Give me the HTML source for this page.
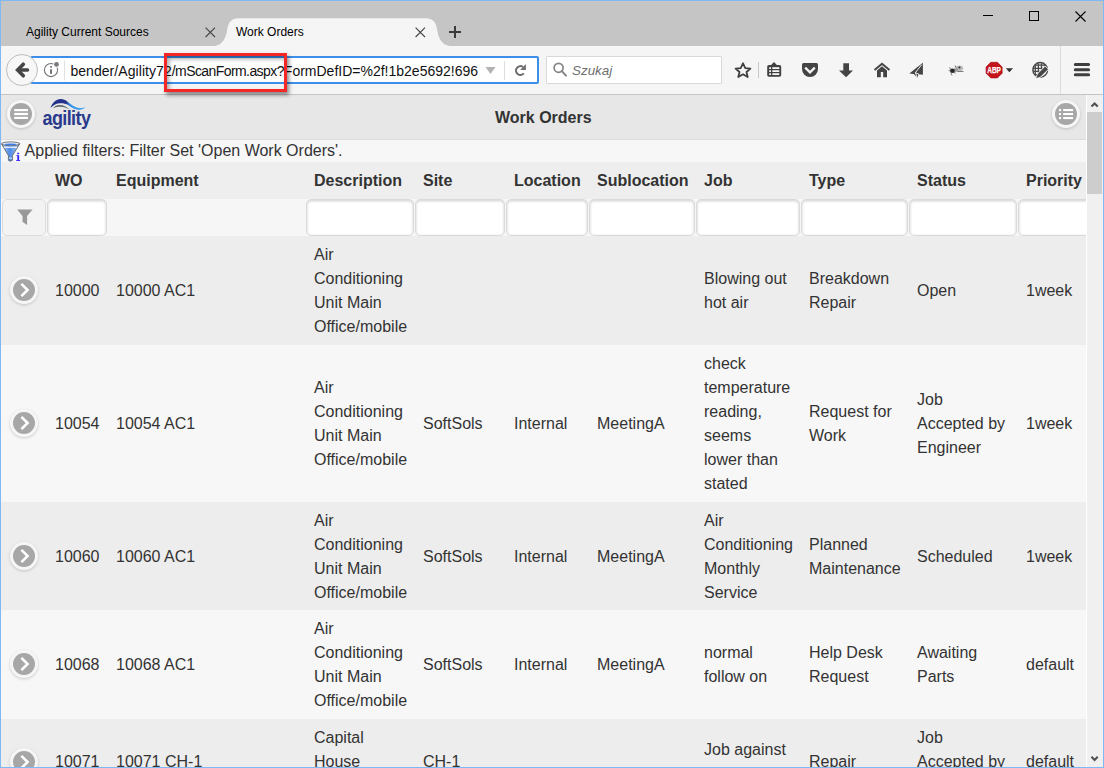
<!DOCTYPE html>
<html><head><meta charset="utf-8">
<style>
*{box-sizing:border-box}
html,body{margin:0;padding:0}
body{width:1104px;height:768px;overflow:hidden;position:relative;background:#f9f9f9;font-family:"Liberation Sans",sans-serif;color:#333}
.abs{position:absolute}
svg{position:absolute;overflow:visible}
#tabbar{left:0;top:0;width:1104px;height:46px;background:#c5c5c5}
#navbar{left:0;top:46px;width:1104px;height:49px;background:#f5f5f5;border-bottom:1px solid #c4c4c4}
.tabt{font-size:12px;color:#000;top:25px;line-height:15px;white-space:nowrap}
#urlbar{left:30px;top:56px;width:509px;height:28px;border:2px solid #3c8ee8;background:#fff;border-radius:2px}
#urltext{left:70.4px;top:62.4px;width:407.2px;height:20px;overflow:hidden;font-size:14px;line-height:19px;color:#111;white-space:nowrap}
#search{left:546px;top:56px;width:176px;height:28px;border:1px solid #d9d9d9;background:#fff;border-radius:1px}
#border{left:0;top:0;width:1104px;height:768px;border:1px solid #7fb8f2;pointer-events:none;z-index:50}
#header{left:1px;top:95px;width:1085px;height:45px;background:#e7e7e7;border-bottom:1px solid #dcdcdc}
#finfo{left:1px;top:140px;width:1085px;height:22px;background:#f7f7f7}
#scroll{left:1086px;top:95px;width:17px;height:672px;background:#f0f0f0;border-left:1px solid #fff}
#thumb{left:1087px;top:112px;width:15px;height:82px;background:#cdcdcd}
#tbl{left:1px;top:162px;border-collapse:collapse;table-layout:fixed;width:1140px}
#tbl td,#tbl th{padding:0 8px;line-height:24px;font-size:16px;vertical-align:middle;text-align:left;overflow:hidden;white-space:nowrap}
#tbl th{font-weight:bold;background:#eeeeee;height:37px}
#tbl tr.f td{background:#f6f6f6;padding:0;height:37px}
#tbl tr.o td{background:#ededed}
#tbl tr.e td{background:#f7f7f7}
#tbl tr.r3 td{padding-top:1px}
#tbl tr.r5 .chev{top:0.4px}
.inp{height:37px;margin:0 0.6px 0 0.3px;border:1px solid #dadada;border-radius:5px;background:#fff;box-shadow:inset 0 1px 3px rgba(0,0,0,.2)}
.fbtn{height:36.4px;margin:0.2px 1px 0 0.6px;border:1px solid #dcdcdc;border-radius:5px;background:#f3f3f3;position:relative}
.circ{position:absolute;width:28px;height:28px;border-radius:50%;background:#f6f6f6;box-shadow:0 1px 3px rgba(0,0,0,.18)}
.circ i{position:absolute;left:3px;top:3px;width:22px;height:22px;border-radius:50%;background:#a7a7a7}
.chev{position:relative;display:block;width:28px;height:28px;margin-left:1px;top:-1px}
</style></head><body>

<div id="tabbar" class="abs"></div>
<!-- active tab -->
<svg style="left:0;top:0" width="500" height="47"><path d="M200 46.5 L210 46.5 C216 46.2 219.5 44.8 221.5 42.8 C224.5 40 226 36 226.8 31.7 C227.6 27 228.5 23 230.8 21 C232.8 19 235 18.2 238.5 18.2 L425.8 18.2 C429.3 18.2 431.5 19 433.5 21 C435.8 23 436.7 27 437.5 31.7 C438.3 36 439.8 40 442.8 42.8 C444.8 44.8 448.3 46.2 454.3 46.5 L464 46.5 L464 47 L200 47 Z" fill="#f5f5f5"/></svg>
<div class="abs tabt" style="left:26px">Agility Current Sources</div>
<div class="abs tabt" style="left:236px">Work Orders</div>
<svg style="left:205px;top:27px" width="11" height="11"><path d="M0.6 0.6 L10 10 M10 0.6 L0.6 10" stroke="#444" stroke-width="1.1"/></svg>
<svg style="left:415px;top:27px" width="11" height="11"><path d="M0.6 0.6 L10 10 M10 0.6 L0.6 10" stroke="#444" stroke-width="1.1"/></svg>
<svg style="left:449px;top:26px" width="12" height="12"><path d="M0 6 H12 M6 0 V12" stroke="#3a3a3a" stroke-width="2"/></svg>
<!-- window controls -->
<div class="abs" style="left:983px;top:15px;width:10px;height:1px;background:#000"></div>
<div class="abs" style="left:1029px;top:11px;width:10px;height:10px;border:1px solid #000"></div>
<svg style="left:1075px;top:11px" width="11" height="11"><path d="M0.5 0.5 L10.5 10.5 M10.5 0.5 L0.5 10.5" stroke="#000" stroke-width="1.1"/></svg>

<div id="navbar" class="abs"></div>
<div id="urlbar" class="abs"></div>
<div id="search" class="abs"></div>
<div id="urltext" class="abs"><span style="letter-spacing:0.06px">bender/Agility72</span><span style="letter-spacing:-0.58px">/mScanForm.aspx?</span>FormDefID=%2f!1b2e5692!696</div>
<!-- back button -->
<div class="abs" style="left:6px;top:54px;width:32px;height:32px;border-radius:50%;border:1px solid #bdbdbd;background:#f7f7f7"></div>
<svg style="left:0;top:0" width="1104" height="100">
 <!-- back arrow -->
 <path d="M18.5 70 H27.5" stroke="#454545" stroke-width="3.5" stroke-linecap="round"/><path d="M23.3 64.2 L17.6 70 L23.3 75.8" stroke="#454545" stroke-width="3.6" fill="none" stroke-linecap="round" stroke-linejoin="miter"/>
 <!-- info -->
 <circle cx="51" cy="70" r="6.6" stroke="#707070" stroke-width="1.05" fill="none"/>
 <rect x="50.1" y="66.1" width="1.9" height="1.5" fill="#6e6e6e"/>
 <rect x="50.1" y="69.3" width="1.9" height="4.6" fill="#6e6e6e"/>
 <circle cx="56.5" cy="64.4" r="3.3" fill="#fff"/>
 <circle cx="56.5" cy="64.4" r="2.4" fill="#7a7a7a"/>
 <rect x="64" y="60.5" width="1" height="20" fill="#e2e2e2"/>
 <!-- dropdown -->
 <path d="M485.5 67 H495.5 L490.5 74 Z" fill="#b3b3b3"/>
 <rect x="504" y="61" width="1" height="19" fill="#dedede"/>
 <!-- reload -->
 <path d="M523.8 73.4 A4.4 4.4 0 1 1 523 67" stroke="#6e6e6e" stroke-width="2.1" fill="none"/>
 <path d="M520.2 69.9 L525.9 69.9 L525.9 63.9 Z" fill="#6e6e6e"/>
 <!-- magnifier -->
 <circle cx="558.6" cy="67.8" r="4.5" stroke="#858585" stroke-width="1.7" fill="none"/>
 <path d="M561.8 71.1 L566 75.6" stroke="#858585" stroke-width="2.1" stroke-linecap="round"/>
 <!-- star -->
 <path d="M743 63.3 L745.3 68.2 L750.4 68.6 L746.5 72 L747.7 77 L743 74.3 L738.3 77 L739.5 72 L735.6 68.6 L740.7 68.2 Z" stroke="#3f3f3f" stroke-width="1.8" fill="none" stroke-linejoin="round"/>
 <rect x="758" y="62" width="1" height="16" fill="#c9c9c9"/>
 <!-- reader list -->
 <path d="M770.6 65.4 L774 61.9 L777.4 65.4 Z" fill="#404040"/>
 <rect x="767.2" y="65" width="14" height="11.8" rx="1.8" fill="#404040"/>
 <g fill="#f5f5f5"><rect x="769.2" y="67.2" width="1.8" height="1.8"/><rect x="772.3" y="67.2" width="7" height="1.8"/>
 <rect x="769.2" y="70.2" width="1.8" height="1.8"/><rect x="772.3" y="70.2" width="7" height="1.8"/>
 <rect x="769.2" y="73.2" width="1.8" height="1.8"/><rect x="772.3" y="73.2" width="7" height="1.8"/></g>
 <!-- pocket -->
 <path d="M802 64.5 Q802 63 803.5 63 L816.5 63 Q818 63 818 64.5 L818 69 A8 8 0 0 1 802 69 Z" fill="#444"/>
 <path d="M805.2 67.6 L810 72.3 L814.8 67.6" stroke="#f5f5f5" stroke-width="2.3" fill="none"/>
 <!-- download -->
 <path d="M843.3 63.2 H849 V70.4 H853 L846.1 77.2 L839 70.4 H843.3 Z" fill="#444"/>
 <!-- home -->
 <path d="M874.5 69.9 L882 63.7 L889.5 69.9" stroke="#444" stroke-width="2" fill="none"/>
 <path d="M877 70.4 L882 66.3 L887 70.4 V77.2 H883.2 V72.1 H880.8 V77.2 H877 Z" fill="#444"/>
 <!-- paper plane -->
 <path d="M922.9 62.8 L909.3 73.5 L913.8 73.9 L917.2 77.8 L918.6 74.2 L922.9 74.8 Z" fill="#454545"/>
 <path d="M921.8 64.6 L915.4 72.6 L916.9 77.2 M915.4 72.6 L919 74.3" stroke="#f0f0f0" stroke-width="1" fill="none"/>
 <!-- bug -->
 <g>
 <ellipse cx="958.6" cy="68.6" rx="4.6" ry="2.9" transform="rotate(-12 958.6 68.6)" fill="#a8a8a8" opacity=".75"/>
 <ellipse cx="955.5" cy="70.5" rx="3" ry="1.6" transform="rotate(-35 955.5 70.5)" fill="#8a8a8a" opacity=".7"/>
 <ellipse cx="952.4" cy="70.8" rx="2.4" ry="2.2" fill="#262626"/>
 <circle cx="959.4" cy="67.5" r="1.1" fill="#303030"/>
 <path d="M949 67.5 L951 69 M948.6 70.5 L950.3 71 M950.8 72.5 L952 75.5 M954 72.5 L955.5 73.2 M957.5 71.5 L963.5 71.5 M955 65.5 L956 67.5" stroke="#707070" stroke-width="0.9" fill="none"/>
 </g>
 <!-- ABP -->
 <path d="M990.8 62.3 H997.4 L1002.1 67 V73.2 L997.4 77.9 H990.8 L986.1 73.2 V67 Z" fill="#c4161a" stroke="#a50f12" stroke-width="0.7"/>
 <text x="987.2" y="73.1" font-family="Liberation Sans" font-weight="bold" font-size="8.6" fill="#fff" textLength="13.8" lengthAdjust="spacingAndGlyphs" stroke="#fff" stroke-width="0.25">ABP</text>
 <path d="M1005.8 68.2 H1013 L1009.4 72.2 Z" fill="#333"/>
 <!-- globe pencil -->
 <defs><clipPath id="gc"><path d="M1030 62 L1050 62 L1048 64 L1030 82 Z"/></clipPath></defs>
 <g clip-path="url(#gc)" stroke="#474747" stroke-width="1.25" fill="none">
  <path d="M1032 65.2 H1048 M1032 68.3 H1048 M1032 71.4 H1048 M1032 74.5 H1048 M1035.3 62 V78 M1038.4 62 V78 M1041.5 62 V78 M1044.6 62 V78" clip-path="url(#gc2)"/>
 </g>
 <defs><clipPath id="gc2"><circle cx="1040.2" cy="69.9" r="7"/></clipPath></defs>
 <circle cx="1040.2" cy="69.9" r="7.3" stroke="#474747" stroke-width="1.5" fill="none"/>
 <path d="M1037.9 73.8 L1045.2 66.5 L1048 69.3 L1040.7 76.6 Z M1037.9 73.8 L1040.7 76.6 L1036.2 78.3 Z" fill="#474747" stroke="#f5f5f5" stroke-width="1.5" paint-order="stroke" stroke-linejoin="round"/>
 <rect x="1060" y="46" width="1" height="48" fill="#dcdcdc"/>
 <!-- hamburger -->
 <g stroke="#3f3f3f" stroke-width="3" stroke-linecap="round"><path d="M1075.3 64.5 H1088.6 M1075.3 69.7 H1088.6 M1075.3 74.7 H1088.6"/></g>
</svg>
<div class="abs" style="left:164px;top:53px;width:123px;height:39px;border:3px solid #f42626;box-shadow:2px 3px 4px rgba(0,0,0,.45), inset 2px 3px 4px rgba(0,0,0,.35);z-index:5"></div>
<div class="abs" style="left:572px;top:61.3px;font-size:13.4px;line-height:19px;font-style:italic;color:#6e6e6e">Szukaj</div>

<!-- page -->
<div id="header" class="abs"></div>
<div id="finfo" class="abs"></div>
<div class="abs" style="left:24.6px;top:140px;font-size:16px;line-height:22px;color:#333;white-space:nowrap">Applied filters: Filter Set 'Open Work Orders'.</div>
<div class="abs" style="left:495px;top:106px;font-size:16px;font-weight:bold;line-height:24px">Work Orders</div>
<!-- menu button -->
<div class="circ" style="left:7px;top:100px"><i></i></div>
<svg style="left:0;top:0" width="100" height="100">
 <g fill="#fff"><rect x="14.2" y="109" width="13.7" height="2.2"/><rect x="14.2" y="112.9" width="13.7" height="2.2"/><rect x="14.2" y="116.8" width="13.7" height="2.2"/></g>
</svg>
<!-- logo -->
<div class="abs" style="left:42.5px;top:108.2px;font-size:18px;font-weight:bold;color:#293a8d;letter-spacing:-0.6px;line-height:20px;transform:scaleY(1.08);transform-origin:0 0">agility</div>
<svg style="left:0;top:0" width="100" height="140">
 <defs><linearGradient id="sw" gradientUnits="userSpaceOnUse" x1="50" y1="0" x2="86" y2="0"><stop offset="0" stop-color="#25318a"/><stop offset="0.44" stop-color="#25318a"/><stop offset="0.56" stop-color="#3593e6"/><stop offset="1" stop-color="#40a6f0"/></linearGradient>
 <linearGradient id="gw" gradientUnits="userSpaceOnUse" x1="53" y1="0" x2="70" y2="0"><stop offset="0" stop-color="#4a5058"/><stop offset="1" stop-color="#7d8389"/></linearGradient></defs>
 <path d="M50.4 107.9 C52.5 102.5 56 99.2 60.5 99 C64.5 98.8 67.5 101.5 70.5 104 C74 106.8 77 108 80 108 C82.5 108 84.5 107.6 85.6 107.2 C84 108.6 81.5 109.8 78 109.8 C74.5 109.8 71.5 107.5 68.5 105.3 C65.5 103.3 62.5 103 59.5 103.2 C55.5 103.6 52.5 105.8 50.4 107.9 Z" fill="url(#sw)"/>
 <path d="M53.2 107.8 C55 106 57 105.2 59.5 105 C63.5 104.8 66.5 106.8 69.8 109.5 C66.5 107.8 63.5 106.8 60 106.7 C57.5 106.7 55.5 107.2 53.2 107.8 Z" fill="url(#gw)"/>
</svg>
<!-- list button right -->
<div class="circ" style="left:1052px;top:100px"><i></i></div>
<svg style="left:0;top:0" width="1100" height="130">
 <g fill="#fff"><rect x="1059" y="109" width="2.1" height="2.1"/><rect x="1063.2" y="109" width="9.9" height="2.1"/>
 <rect x="1059" y="113" width="2.1" height="2.1"/><rect x="1063.2" y="113" width="9.9" height="2.1"/>
 <rect x="1059" y="117" width="2.1" height="2.1"/><rect x="1063.2" y="117" width="9.9" height="2.1"/></g>
</svg>
<!-- funnel info icon -->
<svg style="left:0;top:0" width="30" height="170">
 <defs><linearGradient id="fg" x1="0" x2="1"><stop offset="0" stop-color="#b8d2f4"/><stop offset="0.45" stop-color="#4f8de8"/><stop offset="1" stop-color="#a8c8f2"/></linearGradient></defs>
 <path d="M1.5 143.8 L8.4 155.6 V160.3 Q10.4 162 12.4 160.3 V155.6 L19.7 143.8 Z" fill="url(#fg)" stroke="#505050" stroke-width="0.75"/>
 <ellipse cx="10.6" cy="143.8" rx="9.1" ry="1.9" fill="#e2ebf7" stroke="#505050" stroke-width="0.75"/>
 <ellipse cx="10.6" cy="144.4" rx="6.2" ry="0.9" fill="#3d7ee6"/>
 <rect x="4" y="146.6" width="13" height="1.3" fill="#eef2f8"/>
 <rect x="8.8" y="157.6" width="3.2" height="1" fill="#e8eef6"/>
 <g fill="#3320ff"><rect x="17.2" y="152.8" width="1.9" height="1.4"/><rect x="17.3" y="155.1" width="1.8" height="5.6"/><rect x="16.2" y="160.1" width="3.9" height="0.9"/><rect x="16.4" y="155.1" width="1" height="0.9"/></g>
</svg>

<table id="tbl" class="abs">
<colgroup><col style="width:46px"><col style="width:61px"><col style="width:198px"><col style="width:109px"><col style="width:91px"><col style="width:83px"><col style="width:107px"><col style="width:105px"><col style="width:108px"><col style="width:109px"><col style="width:123px"></colgroup>
<tr><th></th><th>WO</th><th>Equipment</th><th>Description</th><th>Site</th><th>Location</th><th>Sublocation</th><th>Job</th><th>Type</th><th>Status</th><th>Priority</th></tr>
<tr class="f"><td><div class="fbtn"><svg style="left:0;top:0" width="44" height="36"><path d="M14.1 9.4 H29.6 L24.1 16 V24.9 L19.5 21.7 V16 Z" fill="#999"/></svg></div></td><td><div class="inp"></div></td><td></td><td><div class="inp"></div></td><td><div class="inp"></div></td><td><div class="inp"></div></td><td><div class="inp"></div></td><td><div class="inp"></div></td><td><div class="inp"></div></td><td><div class="inp"></div></td><td><div class="inp"></div></td></tr>
<tr class="o r1" style="height:109px"><td><span class="chev"><span class="circ" style="left:0;top:0"><i></i></span><svg style="left:0;top:0" width="44" height="30"><path d="M11.4 7.8 L17.6 14 L11.4 20.2" stroke="#fff" stroke-width="2.6" fill="none"/></svg></span></td><td>10000</td><td>10000 AC1</td><td>Air<br>Conditioning<br>Unit Main<br>Office/mobile</td><td></td><td></td><td></td><td>Blowing out<br>hot air</td><td>Breakdown<br>Repair</td><td>Open</td><td>1week</td></tr>
<tr class="e" style="height:157px"><td><span class="chev"><span class="circ" style="left:0;top:0"><i></i></span><svg style="left:0;top:0" width="44" height="30"><path d="M11.4 7.8 L17.6 14 L11.4 20.2" stroke="#fff" stroke-width="2.6" fill="none"/></svg></span></td><td>10054</td><td>10054 AC1</td><td>Air<br>Conditioning<br>Unit Main<br>Office/mobile</td><td>SoftSols</td><td>Internal</td><td>MeetingA</td><td>check<br>temperature<br>reading,<br>seems<br>lower than<br>stated</td><td>Request for<br>Work</td><td>Job<br>Accepted by<br>Engineer</td><td>1week</td></tr>
<tr class="o r3" style="height:108px"><td><span class="chev"><span class="circ" style="left:0;top:0"><i></i></span><svg style="left:0;top:0" width="44" height="30"><path d="M11.4 7.8 L17.6 14 L11.4 20.2" stroke="#fff" stroke-width="2.6" fill="none"/></svg></span></td><td>10060</td><td>10060 AC1</td><td>Air<br>Conditioning<br>Unit Main<br>Office/mobile</td><td>SoftSols</td><td>Internal</td><td>MeetingA</td><td>Air<br>Conditioning<br>Monthly<br>Service</td><td>Planned<br>Maintenance</td><td>Scheduled</td><td>1week</td></tr>
<tr class="e" style="height:109px"><td><span class="chev"><span class="circ" style="left:0;top:0"><i></i></span><svg style="left:0;top:0" width="44" height="30"><path d="M11.4 7.8 L17.6 14 L11.4 20.2" stroke="#fff" stroke-width="2.6" fill="none"/></svg></span></td><td>10068</td><td>10068 AC1</td><td>Air<br>Conditioning<br>Unit Main<br>Office/mobile</td><td>SoftSols</td><td>Internal</td><td>MeetingA</td><td>normal<br>follow on</td><td>Help Desk<br>Request</td><td>Awaiting<br>Parts</td><td>default</td></tr>
<tr class="o r5" style="height:85px"><td><span class="chev"><span class="circ" style="left:0;top:0"><i></i></span><svg style="left:0;top:0" width="44" height="30"><path d="M11.4 7.8 L17.6 14 L11.4 20.2" stroke="#fff" stroke-width="2.6" fill="none"/></svg></span></td><td>10071</td><td>10071 CH-1</td><td>Capital<br>House<br>Building</td><td>CH-1</td><td></td><td></td><td>Job against<br>boiler</td><td>Repair</td><td>Job<br>Accepted by<br>Engineer</td><td>default</td></tr>
</table>

<div id="scroll" class="abs"></div>
<div id="thumb" class="abs"></div>
<svg style="left:0;top:0" width="1104" height="768">
 <path d="M1091.5 106.6 L1094.6 103.4 L1097.7 106.6" stroke="#505050" stroke-width="2.1" fill="none"/>
 <path d="M1091.5 756.8 L1094.6 760 L1097.7 756.8" stroke="#505050" stroke-width="2.1" fill="none"/>
</svg>
<div id="border" class="abs"></div>
</body></html>
